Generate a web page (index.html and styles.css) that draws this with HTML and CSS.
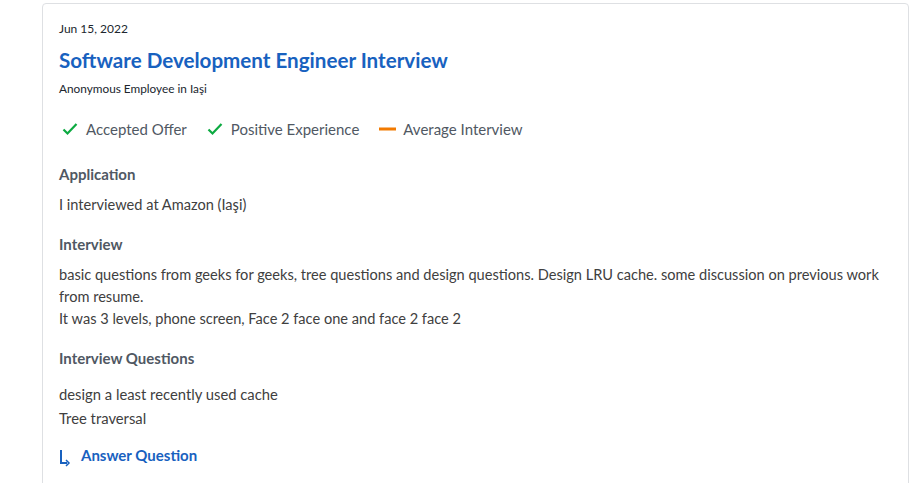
FILE: index.html
```html
<!DOCTYPE html>
<html lang="en">
<head>
<meta charset="utf-8">
<title>Interview review</title>
<link rel="stylesheet" href="styles.css">
</head>
<body>
<div class="card">
  <div class="date">Jun 15, 2022</div>
  <h2 class="title">Software Development Engineer Interview</h2>
  <div class="author">Anonymous Employee in Iaşi</div>
  <div class="ratings">
    <span class="rating"><svg class="ico" width="16" height="16" viewBox="0 0 16 16"><polyline points="1.5,8.5 5.5,12.5 14.5,3" fill="none" stroke="#0caa41" stroke-width="2.2"/></svg>Accepted Offer</span>
    <span class="rating"><svg class="ico" width="16" height="16" viewBox="0 0 16 16"><polyline points="1.5,8.5 5.5,12.5 14.5,3" fill="none" stroke="#0caa41" stroke-width="2.2"/></svg>Positive Experience</span>
    <span class="rating dash"><svg class="ico" width="17" height="16" viewBox="0 0 17 16"><rect x="0" y="6.5" width="17" height="3" fill="#f27a00"/></svg>Average Interview</span>
  </div>
  <h3 class="heading first">Application</h3>
  <p class="text">I interviewed at Amazon (Iaşi)</p>
  <h3 class="heading">Interview</h3>
  <p class="text">basic questions from geeks for geeks, tree questions and design questions. Design LRU cache. some discussion on previous work from resume.<br>It was 3 levels, phone screen, Face 2 face one and face 2 face 2</p>
  <h3 class="heading">Interview Questions</h3>
  <ul class="questions">
    <li>design a least recently used cache</li>
    <li>Tree traversal</li>
  </ul>
  <a class="answer" href="#"><svg class="answer-ico" width="12" height="16" viewBox="0 0 12 16"><path d="M2 1 V14 H8" fill="none" stroke="#1861bf" stroke-width="2"/><path d="M7 11 L10 14 L7 17" fill="none" stroke="#1861bf" stroke-width="1.5"/></svg>Answer Question</a>
</div>
</body>
</html>
```
FILE: styles.css
```css
* { box-sizing: border-box; }
body {
  margin: 0;
  background: #ffffff;
  font-family: Lato, "Open Sans", Arial, sans-serif;
  color: #20262e;
}
.card {
  margin: 3px 0 0 42px;
  width: 867px;
  border: 1px solid #dee0e3;
  border-radius: 4px;
  padding: 17px 16px 30px 16px;
  min-height: 520px;
}
.date {
  font-size: 12px;
  line-height: 16px;
  color: #20262e;
}
.title {
  margin: 9px 0 0;
  font-size: 20.6px;
  line-height: 28px;
  font-weight: 700;
  color: #1861bf;
}
.author {
  margin-top: 7px;
  font-size: 11.8px;
  line-height: 16px;
  color: #20262e;
}
.ratings {
  margin-top: 21px;
  display: flex;
  gap: 17px;
  font-size: 15px;
  line-height: 22px;
  color: #505863;
}
.rating {
  display: flex;
  align-items: center;
  gap: 8px;
  padding-left: 3px;
}
.rating.dash { gap: 7px; }
.ico { display: block; }
.heading {
  margin: 17px 0 0;
  font-size: 15px;
  line-height: 22px;
  font-weight: 700;
  color: #505863;
}
.heading.first { margin-top: 23px; }
.text {
  margin: 9px 0 0;
  font-size: 14.6px;
  line-height: 22px;
  color: #404040;
}
.questions {
  list-style: none;
  margin: 13px 0 0;
  padding: 0;
  font-size: 14.8px;
  line-height: 24px;
  color: #404040;
}
.answer {
  margin-top: 14px;
  display: flex;
  align-items: center;
  gap: 10px;
  font-size: 15px;
  line-height: 22px;
  font-weight: 700;
  color: #1861bf;
  text-decoration: none;
  width: max-content;
}
.answer-ico { display: block; overflow: visible; margin-top: 4px; }
```
